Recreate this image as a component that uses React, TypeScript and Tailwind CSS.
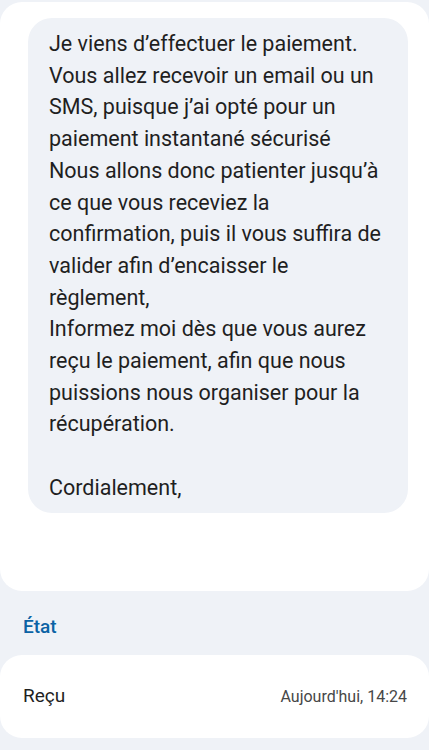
const lines = [
  "Je viens d’effectuer le paiement.",
  "Vous allez recevoir un email ou un",
  "SMS, puisque j’ai opté pour un",
  "paiement instantané sécurisé",
  "Nous allons donc patienter jusqu’à",
  "ce que vous receviez la",
  "confirmation, puis il vous suffira de",
  "valider afin d’encaisser le",
  "règlement,",
  "Informez moi dès que vous aurez",
  "reçu le paiement, afin que nous",
  "puissions nous organiser pour la",
  "récupération.",
  "\u00a0",
  "Cordialement,",
];

export default function App() {
  return (
    <div className="w-[429px] h-[750px] bg-[#eff2f7] overflow-hidden pt-[2px]" style={{ fontFamily: 'Roboto, "Noto Sans", sans-serif' }}>
      <div className="bg-white rounded-[22px] h-[589px] pt-[16px] pl-[28px] pr-[21px]">
        <div className="bg-[#eff2f7] rounded-[24px] pl-[21px] pr-[10px] pt-[10px] pb-[9px] text-[21.5px] leading-[31.7px] text-[#1f1f1f]">
          {lines.map((l, i) => (
            <div key={i} className="whitespace-nowrap">{l}</div>
          ))}
        </div>
      </div>
      <div className="h-[64px] flex items-center pl-[23px] pt-[9px] text-[19px] font-medium text-[#0b63a5]">État</div>
      <div className="bg-white rounded-[22px] h-[83px] flex items-center justify-between pl-[23px] pr-[22px]">
        <span className="text-[19px] text-[#1f1f1f]">Reçu</span>
        <span className="text-[16px] text-[#474747]">Aujourd'hui, 14:24</span>
      </div>
    </div>
  );
}
